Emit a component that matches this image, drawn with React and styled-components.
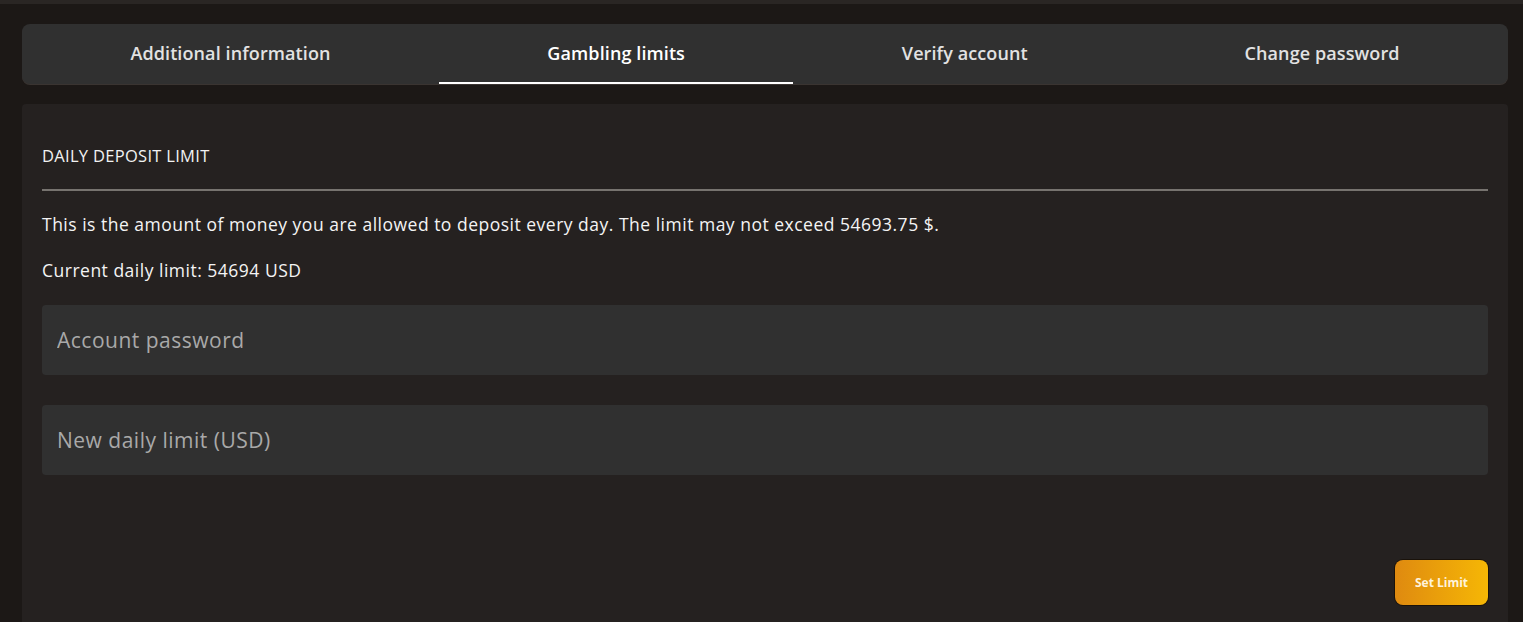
import styled, { createGlobalStyle } from 'styled-components';
import { useState } from 'react';

const GlobalStyle = createGlobalStyle`
    html, body{
        margin: 0;
        padding: 0;
        background: #1c1816;
        font-family: "Open Sans", "Noto Sans", sans-serif;
    }
    *{
        box-sizing: border-box;
    }
`;

const tabs = ["Additional information", "Gambling limits", "Verify account", "Change password"];

export default function App(){
    const [active, setActive] = useState(1);
    const [password, setPassword] = useState("");
    const [limit, setLimit] = useState("");

    return(
        <Page>
            <GlobalStyle />
            <TopStrip />
            <Frame>
                <TabBar>
                    {tabs.map((t, i) => (
                        <Tab key={t} active={i === active} onClick={() => setActive(i)}>{t}</Tab>
                    ))}
                </TabBar>
                <Panel>
                    <Title>DAILY DEPOSIT LIMIT</Title>
                    <Divider />
                    <Text>This is the amount of money you are allowed to deposit every day. The limit may not exceed 54693.75 $.</Text>
                    <Text>Current daily limit: 54694 USD</Text>
                    <Form>
                        <Field type="password" placeholder="Account password"
                        value={password}
                        onChange={e => setPassword(e.target.value)}
                        />
                        <Field placeholder="New daily limit (USD)"
                        value={limit}
                        onChange={e => setLimit(e.target.value)}
                        />
                    </Form>
                    <Actions>
                        <Button>Set Limit</Button>
                    </Actions>
                </Panel>
            </Frame>
        </Page>
    );
}

const Page = styled.div`
    min-height: 622px;
    background: #1c1816;
    overflow: hidden;
`;

const TopStrip = styled.div`
    height: 4px;
    background: #2a2624;
`;

const Frame = styled.div`
    padding: 20px 15px 0 22px;
    display: flex;
    flex-direction: column;
    gap: 20px;
`;

const TabBar = styled.nav`
    display: flex;
    height: 60px;
    background: #303030;
    border-radius: 8px;
    box-shadow: 0 1px 0 #3a3431;
`;

const Tab = styled.button`
    flex: 1 1 auto;
    background: none;
    border: none;
    border-bottom: 2px solid ${p => p.active ? '#ffffff' : 'transparent'};
    color: ${p => p.active ? '#ffffff' : '#e2e2e2'};
    font-family: inherit;
    font-size: 18px;
    font-weight: 600;
    letter-spacing: 0.1px;
    padding: 0 0 1px;
    cursor: pointer;
    white-space: nowrap;
`;

const Panel = styled.section`
    background: #252120;
    border-radius: 4px 4px 0 0;
    padding: 41px 20px 18px;
    min-height: 520px;
`;

const Title = styled.h2`
    margin: 0;
    font-size: 16.5px;
    font-weight: 400;
    letter-spacing: 0.3px;
    color: #f2f2f2;
    line-height: 22px;
`;

const Divider = styled.hr`
    border: none;
    height: 2px;
    background: #77736f;
    margin: 22px 0 22px;
`;

const Text = styled.p`
    margin: 0 0 24px;
    font-size: 17.5px;
    letter-spacing: 0.5px;
    color: #f4f4f4;
    line-height: 22px;
`;

const Form = styled.div`
    display: flex;
    flex-direction: column;
    gap: 30px;
    margin-top: 8px;
`;

const Field = styled.input`
    height: 70px;
    width: 100%;
    background: #303030;
    border: none;
    border-radius: 4px;
    padding: 0 15px;
    color: #f0f0f0;
    font-family: inherit;
    font-size: 21px;
    letter-spacing: 0.5px;
    outline: none;
    &::placeholder{
        color: #a9a9a9;
    }
`;

const Actions = styled.div`
    display: flex;
    justify-content: flex-end;
    margin-top: 85px;
`;

const Button = styled.button`
    width: 93px;
    height: 45px;
    border: none;
    border-radius: 8px;
    background: linear-gradient(90deg, #df8a10, #f6b705);
    box-shadow: 0 0 0 1px #1a120a;
    color: #fff3dc;
    font-family: inherit;
    font-size: 12px;
    font-weight: 700;
    cursor: pointer;
`;
